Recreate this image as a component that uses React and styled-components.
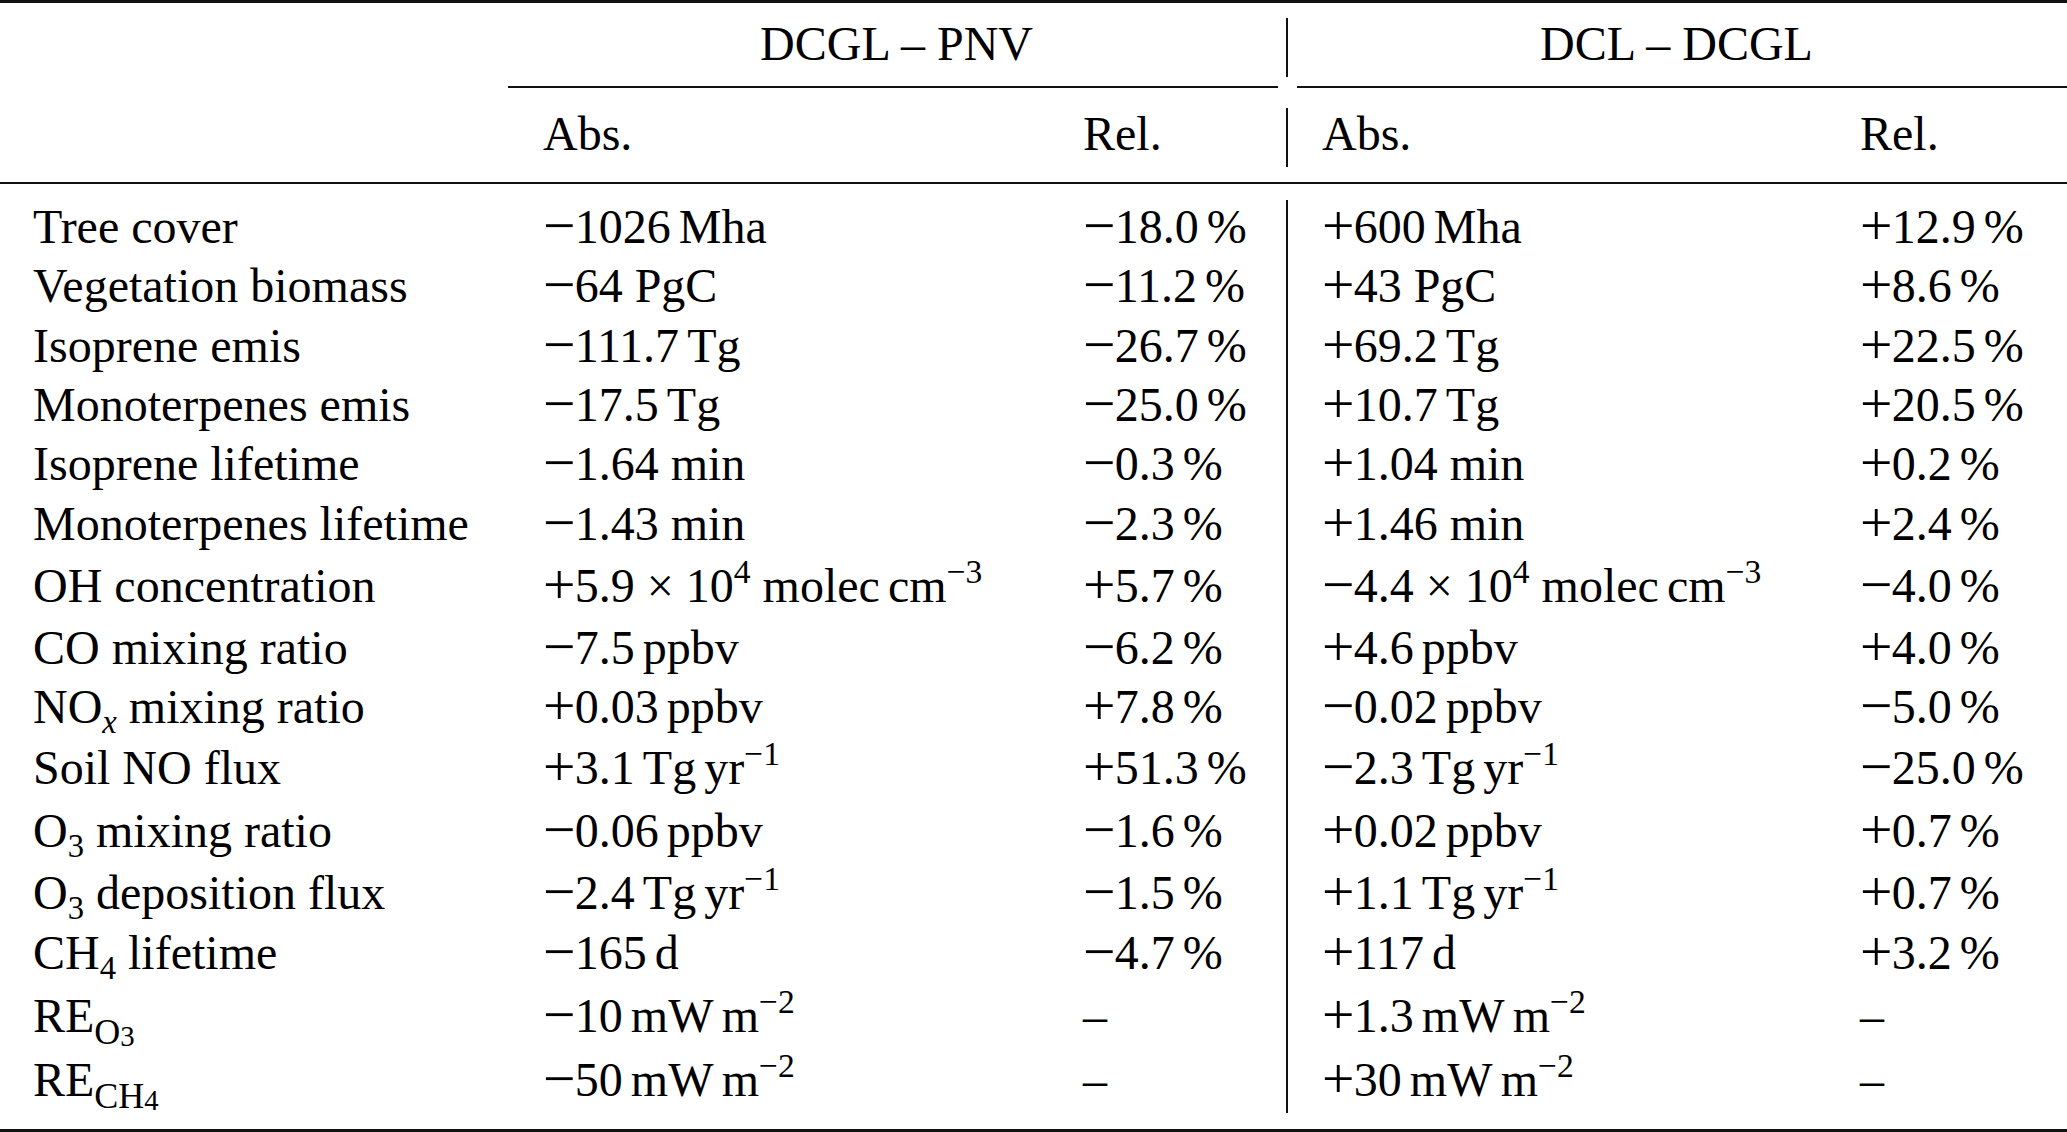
import React from 'react'
import styled, { createGlobalStyle } from 'styled-components'

const GlobalStyle = createGlobalStyle`
  html, body {
    margin: 0;
    padding: 0;
    background: #fff;
  }
  body {
    font-family: "Liberation Serif", "Times New Roman", serif;
    color: #000;
    overflow: hidden;
  }
`

// label | abs | rel | divider | abs | rel
const COLUMNS = '510px 540px 203px 36px 538px 1fr'

const Table = styled.div`
  width: 2067px;
  height: 1132px;
  display: flex;
  flex-direction: column;
  font-size: 48px;
`

const Rule = styled.div`
  flex: none;
  height: ${({ $w }) => $w}px;
  background: #111;
`

const Grid = styled.div`
  display: grid;
  grid-template-columns: ${COLUMNS};
  padding-left: 33px;
  box-sizing: border-box;
  flex: none;
`

const HeadRow = styled(Grid)`
  height: ${({ $h }) => $h}px;
  padding-top: ${({ $top }) => $top}px;
  align-items: start;
`

const CmidRow = styled(Grid)`
  height: 2px;
`

const Cmid = styled.div`
  grid-column: ${({ $col }) => $col};
  height: 2px;
  background: #111;
  margin: ${({ $m }) => $m};
`

const Body = styled(Grid)`
  grid-template-rows: ${({ $rows }) => $rows};
  padding-top: 13px;
  padding-bottom: 19px;
  align-items: start;
`

const Cell = styled.div`
  grid-column: ${({ $col }) => $col || 'auto'};
  line-height: 60px;
  white-space: nowrap;
  text-align: ${({ $center }) => ($center ? 'center' : 'left')};
  padding-right: ${({ $center }) => ($center ? 36 : 0)}px;
`

const Divider = styled.div`
  grid-column: 4;
  grid-row: ${({ $span }) => ($span ? '1 / -1' : '1')};
  justify-self: start;
  align-self: stretch;
  width: 2px;
  background: #111;
  margin: ${({ $m }) => $m};
`

// math plus / minus, drawn a bit larger than the text glyphs as in the typeset original
const Sign = styled.span`
  display: inline-block;
  font-size: 1.2em;
  line-height: 0.9;
  width: 0.55em;
  vertical-align: -0.035em;
`

const Thin = styled.span`
  display: inline-block;
  width: 0.17em;
`

const Sup = styled.sup`
  font-size: 0.7em;
  line-height: 0;
  vertical-align: 0.57em;
`

const Sub = styled.sub`
  font-size: ${({ $big }) => ($big ? '0.75em' : '0.68em')};
  line-height: 0;
  vertical-align: ${({ $big }) => ($big ? '-0.32em' : '-0.3em')};
`

const SubSub = styled.sub`
  font-size: 0.8em;
  line-height: 0;
  vertical-align: -0.08em;
`

const num = (s, n, unit, wide) => (
  <>
    <Sign>{s}</Sign>
    {n}
    {wide ? ' ' : <Thin />}
    {unit}
  </>
)

const pct = (s, n) => (
  <>
    <Sign>{s}</Sign>
    {n}
    <Thin />%
  </>
)

const conc = (s, n) => (
  <>
    <Sign>{s}</Sign>
    {n} × 10<Sup>4</Sup> molec<Thin />cm<Sup>−3</Sup>
  </>
)

const flux = <>Tg<Thin />yr<Sup>−1</Sup></>
const forcing = <>mW<Thin />m<Sup>−2</Sup></>

const rows = [
  { label: 'Tree cover', h: 59, a1: num('−', '1026', 'Mha'), r1: pct('−', '18.0'), a2: num('+', '600', 'Mha'), r2: pct('+', '12.9') },
  { label: 'Vegetation biomass', h: 60, a1: num('−', '64', 'PgC', true), r1: pct('−', '11.2'), a2: num('+', '43', 'PgC', true), r2: pct('+', '8.6') },
  { label: 'Isoprene emis', h: 59, a1: num('−', '111.7', 'Tg'), r1: pct('−', '26.7'), a2: num('+', '69.2', 'Tg'), r2: pct('+', '22.5') },
  { label: 'Monoterpenes emis', h: 59, a1: num('−', '17.5', 'Tg'), r1: pct('−', '25.0'), a2: num('+', '10.7', 'Tg'), r2: pct('+', '20.5') },
  { label: 'Isoprene lifetime', h: 60, a1: num('−', '1.64', 'min', true), r1: pct('−', '0.3'), a2: num('+', '1.04', 'min', true), r2: pct('+', '0.2') },
  { label: 'Monoterpenes lifetime', h: 62, a1: num('−', '1.43', 'min', true), r1: pct('−', '2.3'), a2: num('+', '1.46', 'min', true), r2: pct('+', '2.4') },
  { label: 'OH concentration', h: 62, a1: conc('+', '5.9'), r1: pct('+', '5.7'), a2: conc('−', '4.4'), r2: pct('−', '4.0') },
  { label: 'CO mixing ratio', h: 59, a1: num('−', '7.5', 'ppbv'), r1: pct('−', '6.2'), a2: num('+', '4.6', 'ppbv'), r2: pct('+', '4.0') },
  { label: <>NO<Sub><i>x</i></Sub> mixing ratio</>, h: 61, a1: num('+', '0.03', 'ppbv'), r1: pct('+', '7.8'), a2: num('−', '0.02', 'ppbv'), r2: pct('−', '5.0') },
  { label: 'Soil NO flux', h: 63, a1: num('+', '3.1', flux), r1: pct('+', '51.3'), a2: num('−', '2.3', flux), r2: pct('−', '25.0') },
  { label: <>O<Sub>3</Sub> mixing ratio</>, h: 62, a1: num('−', '0.06', 'ppbv'), r1: pct('−', '1.6'), a2: num('+', '0.02', 'ppbv'), r2: pct('+', '0.7') },
  { label: <>O<Sub>3</Sub> deposition flux</>, h: 60, a1: num('−', '2.4', flux), r1: pct('−', '1.5'), a2: num('+', '1.1', flux), r2: pct('+', '0.7') },
  { label: <>CH<Sub>4</Sub> lifetime</>, h: 63, a1: num('−', '165', 'd'), r1: pct('−', '4.7'), a2: num('+', '117', 'd'), r2: pct('+', '3.2') },
  { label: <>RE<Sub $big>O<SubSub>3</SubSub></Sub></>, h: 64, a1: num('−', '10', forcing), r1: '–', a2: num('+', '1.3', forcing), r2: '–' },
  { label: <>RE<Sub $big>CH<SubSub>4</SubSub></Sub></>, h: 60, a1: num('−', '50', forcing), r1: '–', a2: num('+', '30', forcing), r2: '–' },
]

export default function App() {
  const rowHeights = rows.map((r) => `${r.h}px`).join(' ')
  return (
    <>
      <GlobalStyle />
      <Table>
        <Rule $w={3} />
        <HeadRow $h={83} $top={11}>
          <Cell $col="2 / 4" $center>DCGL – PNV</Cell>
          <Divider $m="4px 0 9px" />
          <Cell $col="5 / -1" $center>DCL – DCGL</Cell>
        </HeadRow>
        <CmidRow>
          <Cmid $col="2 / 4" $m="0 8px 0 -35px" />
          <Cmid $col="4 / -1" $m="0 0 0 11px" />
        </CmidRow>
        <HeadRow $h={94} $top={16}>
          <Cell $col="2">Abs.</Cell>
          <Cell $col="3">Rel.</Cell>
          <Divider $m="4px 0 15px" />
          <Cell $col="5">Abs.</Cell>
          <Cell $col="6">Rel.</Cell>
        </HeadRow>
        <Rule $w={2} />
        <Body $rows={rowHeights}>
          <Divider $span $m="3px 0 -3px" />
          {rows.map((r, i) => (
            <React.Fragment key={i}>
              <Cell>{r.label}</Cell>
              <Cell>{r.a1}</Cell>
              <Cell>{r.r1}</Cell>
              <Cell>{r.a2}</Cell>
              <Cell>{r.r2}</Cell>
            </React.Fragment>
          ))}
        </Body>
        <Rule $w={3} />
      </Table>
    </>
  )
}
